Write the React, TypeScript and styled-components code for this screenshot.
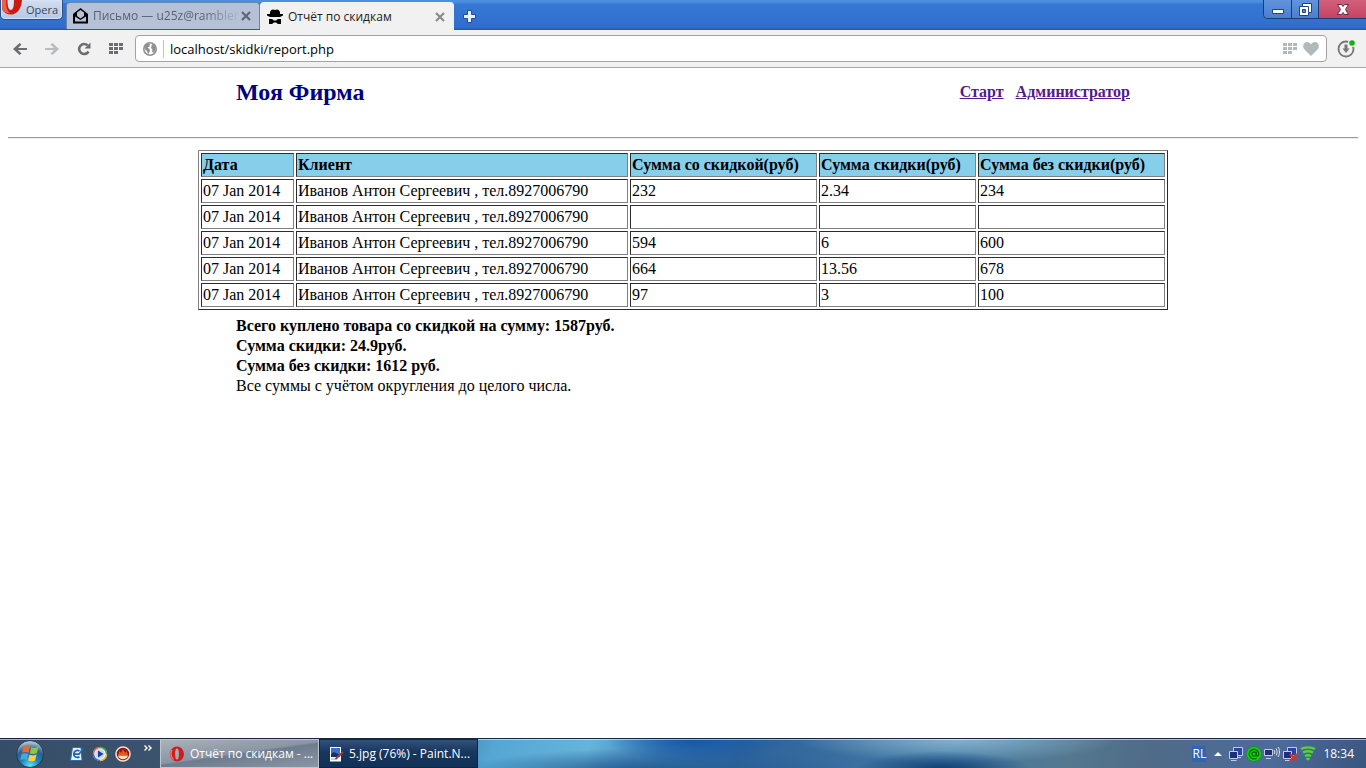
import React from 'react';
import styled, { createGlobalStyle } from 'styled-components';

const UI_FONT = '"Open Sans", "Noto Sans", sans-serif';
const PAGE_FONT = '"Liberation Serif", "Times New Roman", serif';

const GlobalStyle = createGlobalStyle`
  *, *::before, *::after { box-sizing: border-box; }
  body { margin: 0; background: #fff; }
  button, input { font: inherit; color: inherit; margin: 0; }
  svg { display: block; flex: none; }
`;

const Screen = styled.div`
  min-height: 100vh;
  display: flex;
  flex-direction: column;
`;

/* ---------- browser frame ---------- */

const TabStrip = styled.header`
  display: flex;
  align-items: flex-start;
  height: 30px;
  background: linear-gradient(#4a90e0 0, #4a90e0 2px, #3778d4 4px, #2f6dcd 28px, #235ca8 29px);
  font: 12px/16px ${UI_FONT};
`;

const OperaButton = styled.button`
  display: flex;
  align-items: center;
  gap: 4px;
  width: 63px;
  height: 20px;
  padding: 0 0 0 1px;
  border: 1px solid #2b4f86;
  border-width: 0 1px 1px;
  border-radius: 0 0 5px 5px;
  background: linear-gradient(#d3def0, #b4c8e8);
  box-shadow: inset 0 0 0 1px #d5e2f5;
  color: #3c4656;
  font-size: 11px;
  svg { align-self: flex-start; }
`;

const Tabs = styled.div`
  display: flex;
  flex: 1;
  min-width: 0;
  align-items: flex-start;
  padding: 2px 0 0 3px;
`;

const Tab = styled.div<{ $active?: boolean }>`
  display: flex;
  align-items: center;
  width: 194px;
  height: ${p => (p.$active ? 28 : 27)}px;
  padding: 0 8px 0 6px;
  border: 1px solid ${p => (p.$active ? '#f1f1f1' : '#6d84a8')};
  border-bottom: 0;
  border-radius: 4px 4px 0 0;
  background: ${p => (p.$active ? '#f1f1f1' : '#b4c1d6')};
  color: ${p => (p.$active ? '#222' : '#596270')};
`;

const TabTitle = styled.button<{ $fade?: boolean }>`
  flex: 1;
  min-width: 0;
  padding: 0 0 0 5px;
  border: 0;
  background: none;
  white-space: nowrap;
  text-align: left;
  ${p => p.$fade && 'mask-image: linear-gradient(90deg, #000 75%, transparent);'}
`;

const IconButton = styled.button`
  display: flex;
  align-items: center;
  justify-content: center;
  padding: 0;
  border: 0;
  background: none;
`;

const NewTab = styled(IconButton)`
  width: 30px;
  height: 28px;
`;

const WindowControls = styled.div`
  display: flex;
  height: 19px;
  border: 1px solid #1d3c74;
  border-width: 0 0 1px 1px;
  border-radius: 0 0 0 5px;
  overflow: hidden;
`;

const WindowButton = styled(IconButton)<{ $close?: boolean }>`
  width: ${p => (p.$close ? 48 : 27)}px;
  background: ${p => (p.$close ? 'linear-gradient(#d0607c, #c64462)' : 'linear-gradient(#6294dc, #4a7fd0)')};
  & + & { border-left: 1px solid #1d3c74; }
`;

const Toolbar = styled.nav`
  display: flex;
  align-items: center;
  height: 38px;
  padding: 0 10px 0 11px;
  border-bottom: 1px solid #a9a9a9;
  background: #f1f1f1;
`;

const NavButtons = styled.div`
  display: flex;
  gap: 14px;
  margin-right: 10px;
  ${IconButton} { width: 18px; height: 20px; }
`;

const AddressBar = styled.div`
  display: flex;
  flex: 1;
  align-items: center;
  height: 27px;
  margin-right: 10px;
  padding: 0 7px;
  border: 1px solid #a3a3a3;
  border-radius: 4px;
  background: #fff;
  gap: 6px;
`;

const Address = styled.input`
  flex: 1;
  min-width: 0;
  height: 18px;
  padding: 0 0 0 6px;
  border: 0;
  border-left: 1px solid #c4c4c4;
  outline: 0;
  background: none;
  color: #000;
  font: 13px/18px ${UI_FONT};
`;

/* ---------- report page ---------- */

const Page = styled.main`
  flex: 1;
  padding: 0 8px;
  color: #000;
  font: 16px/20px ${PAGE_FONT};
`;

const Column = styled.div`
  width: 100%;
  max-width: 894px;
  margin: 0 auto;
`;

const Masthead = styled(Column)`
  display: flex;
  align-items: center;
  justify-content: space-between;
  height: 48px;
`;

const SiteName = styled.h1`
  margin: 0;
  color: #000080;
  font-size: 24px;
  line-height: 28px;
`;

const Menu = styled.nav`
  display: flex;
  gap: 12px;
  font-weight: bold;
`;

const MenuLink = styled.a`
  color: #551a8b;
`;

const Rule = styled.hr`
  height: 2px;
  margin: 21px 0 11px;
  border: 0;
  border-top: 1px solid #9a9a9a;
  border-bottom: 1px solid #eee;
`;

const ReportTable = styled.table`
  width: 100%;
  max-width: 970px;
  margin: 0 auto;
  table-layout: fixed;
  border: 1px solid;
  border-color: #808080 #2c2c2c #2c2c2c #808080;
  border-spacing: 2px;
  th, td {
    height: 24px;
    padding: 1px;
    border: 1px solid;
    border-color: #2c2c2c #808080 #808080 #2c2c2c;
    text-align: left;
  }
  th { background: #87ceeb; }
`;

const Summary = styled(Column)`
  padding-top: 6px;
  p { margin: 0; }
`;

/* ---------- taskbar ---------- */

const Taskbar = styled.footer`
  display: flex;
  height: 30px;
  border-top: 1px solid #16263d;
  box-shadow: inset 0 1px 0 #ffffff90;
  background:
    radial-gradient(ellipse 90px 20px at 69% 110%, #123f74 10%, transparent),
    radial-gradient(ellipse 90px 26px at 51% 0, #1a5aa5 10%, transparent),
    radial-gradient(ellipse 160px 24px at 70% 0, #84b0c8 5%, transparent),
    radial-gradient(ellipse 200px 26px at 48% 120%, #285f94 20%, transparent),
    linear-gradient(110deg, #364d68 0%, #3c536e 12%, #4f8fb8 34%, #55a6d3 36%, #66b4da 43%,
      #3a7ab5 49%, #2d639b 54%, #3a6e9f 62%, #427ca9 69%, #55788f 78%, #4f6b88 84%, #4d6b9a 93%, #39567f 100%);
  color: #fff;
  font: 12px/16px ${UI_FONT};
`;

const Launchers = styled.div`
  display: flex;
  align-items: center;
  width: 160px;
  padding: 0 6px 0 16px;
`;

const QuickItems = styled.div`
  display: flex;
  align-items: center;
  gap: 7px;
  margin-left: 25px;
`;

const More = styled(IconButton)`
  align-self: flex-start;
  margin: 6px 0 0 13px;
`;

const Task = styled.button<{ $active?: boolean }>`
  display: flex;
  align-items: center;
  gap: 5px;
  width: 159px;
  padding: 0 8px;
  border: 1px solid ${p => (p.$active ? '#c0c6cd' : '#0d2646')};
  background: ${p =>
    p.$active
      ? 'linear-gradient(172deg, #a9b1bb 0%, #8b96a4 48%, #6d7c8e 52%, #8a96a4 100%)'
      : 'linear-gradient(#31527a, #17365c 45%, #123158)'};
  white-space: nowrap;
`;

const Tray = styled.div`
  display: flex;
  align-items: center;
  gap: 2px;
  margin-left: auto;
  padding-right: 12px;
`;

const Language = styled.span`
  width: 14px;
  margin-right: 6px;
  background: #2e66b4;
  text-align: center;
`;

const TrayToggle = styled(IconButton)`
  margin-right: 4px;
`;

const Clock = styled.time`
  margin-left: 5px;
`;

/* ---------- drawings ---------- */

const OperaLogo = () => (
  <svg width="20" height="16" viewBox="0 0 20 16">
    <path d="M0 0H20C19.500 8 15.500 14.500 9 14.500C5 14.500 2 12.500 0 9.500Z" fill="#c91b12" />
    <path d="M0 0H4C4 6 5 12 8.500 13C4 14 1 11 0 9Z" fill="#e8604f" />
    <path d="M5.500 0H12C12 6.500 11 10 8.800 10C6.500 10 5.500 6 5.500 0Z" fill="#dbe4f2" />
  </svg>
);

const Cross = ({ color }: { color: string }) => (
  <svg width="10" height="10" viewBox="0 0 10 10" stroke={color} strokeWidth="2.200">
    <path d="M1 1L9 9M9 1L1 9" />
  </svg>
);

const Envelope = () => (
  <svg width="15" height="16" viewBox="0 0 15 16">
    <path d="M7.500 0L15 6V15.500H0V6Z" fill="#000" />
    <path d="M4 4.500L7.500 2L11 4.500V8L7.500 10.500L4 8Z" fill="#b4c1d6" />
    <path d="M2 8.500L7.500 12L13 8.500V13.500H2Z" fill="#b4c1d6" />
  </svg>
);

const Spy = () => (
  <svg width="16" height="16" viewBox="0 0 16 16" fill="#000">
    <path d="M3 5V3.500C3 2 4.500 .5 6 .5L8 1L10 .5C11.500 .5 13 2 13 3.500V5H16V6.500L13 8H3L0 6.500V5Z" />
    <path d="M2 10H5L7 11.500H9L11 10H14V15H11L9 13.500H7L5 15H2Z" />
  </svg>
);

const Plus = () => (
  <svg width="13" height="13" viewBox="0 0 13 13">
    <path d="M4.500 .5H8.500V4.500H12.500V8.500H8.500V12.500H4.500V8.500H.5V4.500H4.500Z" fill="#e4efff" stroke="#1f4f9c" />
  </svg>
);

const MinimizeGlyph = () => (
  <svg width="14" height="12" viewBox="0 0 14 12">
    <path d="M1.500 6.500H12.500V10.500H1.500Z" fill="#fff" stroke="#24457c" />
  </svg>
);

const RestoreGlyph = () => (
  <svg width="13" height="13" viewBox="0 0 13 13">
    <path d="M3.500 .5H12.500V9.500H9.500V12.500H.5V3.500H3.500Z" fill="#fff" stroke="#24457c" />
    <path d="M3 3.500H9.500V9.500" fill="none" stroke="#24457c" />
    <path d="M3.500 6.500H6.500V9.500H3.500Z" fill="#5a8cd8" stroke="#24457c" />
  </svg>
);

const CloseGlyph = () => (
  <svg width="12" height="11" viewBox="0 0 12 11">
    <path d="M.5 .5H4.500L6 2.500L7.500 .5H11.500L8.500 5.500L11.500 10.500H7.500L6 8.500L4.500 10.500H.5L3.500 5.500Z" fill="#fff" stroke="#5e2f4a" />
  </svg>
);

const Arrow = ({ color, flip }: { color: string; flip?: boolean }) => (
  <svg width="14" height="12" viewBox="0 0 14 12" fill={color}>
    <path d={flip ? 'M0 5H9L5.500 1.500L7.500 0L14 6L7.500 12L5.500 10.500L9 7H0Z' : 'M14 5H5L8.500 1.500L6.500 0L0 6L6.500 12L8.500 10.500L5 7H14Z'} />
  </svg>
);

const Reload = () => (
  <svg width="14" height="14" viewBox="0 0 14 14">
    <path d="M10.500 3.300A5 5 0 1 0 11.500 9.500" fill="none" stroke="#6a6e72" strokeWidth="2.600" />
    <path d="M13.500 .5V6.500H7.500Z" fill="#6a6e72" />
  </svg>
);

const Grid = ({ color }: { color: string }) => (
  <svg width="14" height="11" viewBox="0 0 14 11" fill={color}>
    <path d="M0 0h4v3H0zM5 0h4v3H5zM10 0h4v3h-4zM0 4h4v3H0zM5 4h4v3H5zM10 4h4v3h-4zM0 8h4v3H0zM5 8h4v3H5z" />
  </svg>
);

const Globe = () => (
  <svg width="14" height="14" viewBox="0 0 14 14">
    <circle cx="7" cy="7" r="6.200" fill="#fff" stroke="#909090" strokeWidth="1.600" />
    <path d="M1.500 4L4 1.500L7 2L6.500 4.500L4.500 5.500L6.500 7L7 9L5 12.500L4 9L2 7.500ZM9 2L12 4L12.500 8L10.500 11L9 9.500L9.500 7.500L8 6Z" fill="#909090" />
  </svg>
);

const Heart = () => (
  <svg width="16" height="14" viewBox="0 0 16 14">
    <path d="M8 14L1.500 7.500C-1.500 4 1 0 4 0C6 0 7.300 1 8 2.500C8.700 1 10 0 12 0C15 0 17.500 4 14.500 7.500Z" fill="#b1b9bd" />
  </svg>
);

const Download = () => (
  <svg width="19" height="19" viewBox="0 0 19 19">
    <circle cx="9" cy="10" r="7.500" fill="none" stroke="#777" strokeWidth="1.800" />
    <path d="M7.500 5.500H10.500V9.500H12.500L9 14L5.500 9.500H7.500Z" fill="#777" />
    <circle cx="15" cy="4" r="4" fill="#f1f1f1" />
    <circle cx="15" cy="4" r="2.800" fill="#12b312" />
  </svg>
);

const StartOrb = () => (
  <svg width="28" height="28" viewBox="0 0 28 28">
    <defs>
      <radialGradient id="orb" cx="50%" cy="95%" r="90%">
        <stop offset="0" stopColor="#5fe6fb" />
        <stop offset=".4" stopColor="#1f7fb8" />
        <stop offset=".7" stopColor="#2b628f" />
        <stop offset="1" stopColor="#b4c6d4" />
      </radialGradient>
    </defs>
    <circle cx="14" cy="14" r="13.500" fill="url(#orb)" stroke="#1f3a58" />
    <path d="M7.500 6.500C10 5.300 12 5.500 14 6.800L12.600 12.800C10.600 11.600 8.500 11.600 6 12.700Z" fill="#ee6a28" />
    <path d="M15.200 7.300C17.500 8.500 19.700 8.300 22.500 7.100L20.900 13C18.500 14.200 16 14.200 13.800 13.200Z" fill="#8fc63d" />
    <path d="M5.700 14.100C8 13 10.300 13 12.300 14.200L10.900 20C8.900 18.900 7 18.900 4.300 20Z" fill="#4ba4e8" />
    <path d="M13.500 14.700C15.800 15.700 18.200 15.600 20.600 14.500L19 20.500C16.600 21.600 14.300 21.600 12 20.600Z" fill="#fbd13b" />
  </svg>
);

const NoteIcon = () => (
  <svg width="16" height="16" viewBox="0 0 16 16">
    <path d="M3.500 1.500H12L13 14.500H1.500Z" fill="#e4f4ff" stroke="#2470b6" />
    <path d="M10.500 5C8 3.500 5 5 4.800 8S7.500 12 10.500 10.800M5.500 8.200H10L14.500 2.500" fill="none" stroke="#1c67b8" strokeWidth="1.800" />
  </svg>
);

const PlayerIcon = () => (
  <svg width="16" height="16" viewBox="0 0 16 16">
    <circle cx="8" cy="8" r="7" fill="#fff" />
    <path d="M8 1.500A6.500 6.500 0 0 1 14.500 8" fill="none" stroke="#48a648" strokeWidth="1.600" />
    <path d="M14.500 8A6.500 6.500 0 0 1 8 14.500" fill="none" stroke="#e8b22c" strokeWidth="1.600" />
    <path d="M8 14.500A6.500 6.500 0 0 1 1.500 8" fill="none" stroke="#3c74c8" strokeWidth="1.600" />
    <path d="M1.500 8A6.500 6.500 0 0 1 8 1.500" fill="none" stroke="#d8694a" strokeWidth="1.600" />
    <circle cx="8" cy="8" r="4.800" fill="#c9d8f2" />
    <path d="M6 4.500L11.500 8L6 11.500Z" fill="#1f3aa0" />
  </svg>
);

const BurnerIcon = () => (
  <svg width="16" height="16" viewBox="0 0 16 16">
    <circle cx="8" cy="8" r="7" fill="#8f1510" stroke="#f1dcd4" strokeWidth="1.600" />
    <path d="M3 9L4.500 5L6 7L8 3L10 7L11.500 5L13 9Z" fill="#e8581c" />
    <path d="M3 9.500H13C12.500 12 10.500 13.200 8 13.200S3.500 12 3 9.500Z" fill="#f6e3b0" />
  </svg>
);

const Chevrons = () => (
  <svg width="8" height="6" viewBox="0 0 8 6" fill="none" stroke="#fff" strokeWidth="1.400">
    <path d="M.5 .5L3 3L.5 5.500M4.500 .5L7 3L4.500 5.500" />
  </svg>
);

const OperaRing = () => (
  <svg width="16" height="16" viewBox="0 0 16 16">
    <ellipse cx="8" cy="8" rx="7" ry="7.500" fill="#cf1d1d" />
    <path d="M3 4C1.500 7 2 11 4.500 13.500" fill="none" stroke="#f07a70" strokeWidth="1.400" />
    <ellipse cx="8" cy="8" rx="1.900" ry="5.500" fill="#a2abb6" />
  </svg>
);

const PaintIcon = () => (
  <svg width="16" height="16" viewBox="0 0 16 16">
    <path d="M2 1H13V15.500H2Z" fill="#fff" />
    <path d="M3 2H12V10H3Z" fill="#3b6fc8" />
    <path d="M3 8L6 6L12 9V11H3Z" fill="#16306e" />
    <path d="M3 12H8V14H3Z" fill="#c9cfdd" />
    <path d="M15 6L7.500 13" stroke="#a23b3b" strokeWidth="2" />
  </svg>
);

const UpArrow = () => (
  <svg width="8" height="4" viewBox="0 0 8 4">
    <path d="M0 4L4 0L8 4Z" fill="#fff" />
  </svg>
);

const Monitors = ({ off }: { off?: boolean }) => (
  <svg width="16" height="16" viewBox="0 0 16 16">
    <path d="M5.500 1.500H14.500V9.500H5.500ZM8 11.500H13" fill="#27459c" stroke="#c6cbe4" />
    <path d="M1.500 5.500H9.500V12.500H1.500ZM3 14.500H8.500" fill="#1c2f7a" stroke="#c6cbe4" />
    {off && <path d="M8 8L15 15M15 8L8 15" stroke="#e02c2c" strokeWidth="2.400" />}
  </svg>
);

const AgentIcon = () => (
  <svg width="16" height="16" viewBox="0 0 16 16" fill="none">
    <circle cx="8" cy="8" r="7.500" fill="#13d013" stroke="#0a8a0a" strokeWidth=".6" />
    <circle cx="8" cy="8" r="2.200" stroke="#075e07" strokeWidth="1.200" />
    <path d="M10.300 5.500V9C10.300 11 12.800 10.500 12.800 8A4.800 4.800 0 1 0 10.500 12.200" stroke="#075e07" strokeWidth="1.100" />
  </svg>
);

const WirelessMonitor = () => (
  <svg width="16" height="16" viewBox="0 0 16 16" fill="none">
    <path d="M.5 3.500H8.500V9.500H.5ZM2 12.500H7" fill="#1c2f7a" stroke="#c6cbe4" />
    <path d="M10 4C11 5 11 7 10 8M12 2.500C13.500 4.500 13.500 7.500 12 9.500M14 1C16 4 16 8 14 11" stroke="#e3e7ee" />
  </svg>
);

const Signal = () => (
  <svg width="16" height="16" viewBox="0 0 16 16" fill="none" stroke="#56d13c" strokeWidth="2.400">
    <path d="M1 3C5 .8 11 .8 15 3M3 6.500C6 5 10 5 13 6.500M5 10C7 9 9 9 11 10M6.500 13.300C7.500 12.800 8.500 12.800 9.500 13.300" />
  </svg>
);

/* ---------- data ---------- */

const columns = [
  { title: 'Дата', width: 93 },
  { title: 'Клиент', width: 332 },
  { title: 'Сумма со скидкой(руб)', width: 187 },
  { title: 'Сумма скидки(руб)', width: 157 },
  { title: 'Сумма без скидки(руб)', width: 187 },
];

const client = 'Иванов Антон Сергеевич , тел.8927006790';

const rows = [
  ['07 Jan 2014', client, '232', '2.34', '234'],
  ['07 Jan 2014', client, '', '', ''],
  ['07 Jan 2014', client, '594', '6', '600'],
  ['07 Jan 2014', client, '664', '13.56', '678'],
  ['07 Jan 2014', client, '97', '3', '100'],
];

export default function App() {
  return (
    <Screen>
      <GlobalStyle />
      <TabStrip>
        <OperaButton><OperaLogo />Opera</OperaButton>
        <Tabs>
          <Tab>
            <Envelope />
            <TabTitle $fade>Письмо — u25z@rambler</TabTitle>
            <IconButton aria-label="Закрыть вкладку"><Cross color="#5d6776" /></IconButton>
          </Tab>
          <Tab $active>
            <Spy />
            <TabTitle>Отчёт по скидкам</TabTitle>
            <IconButton aria-label="Закрыть вкладку"><Cross color="#8b8b8b" /></IconButton>
          </Tab>
          <NewTab aria-label="Новая вкладка"><Plus /></NewTab>
        </Tabs>
        <WindowControls>
          <WindowButton aria-label="Свернуть"><MinimizeGlyph /></WindowButton>
          <WindowButton aria-label="Восстановить"><RestoreGlyph /></WindowButton>
          <WindowButton $close aria-label="Закрыть"><CloseGlyph /></WindowButton>
        </WindowControls>
      </TabStrip>
      <Toolbar>
        <NavButtons>
          <IconButton aria-label="Назад"><Arrow color="#6a6e72" /></IconButton>
          <IconButton aria-label="Вперёд"><Arrow color="#b9bbbd" flip /></IconButton>
          <IconButton aria-label="Обновить"><Reload /></IconButton>
          <IconButton aria-label="Экспресс-панель"><Grid color="#6a6e72" /></IconButton>
        </NavButtons>
        <AddressBar>
          <Globe />
          <Address aria-label="Адрес" defaultValue="localhost/skidki/report.php" />
          <IconButton aria-label="Добавить на экспресс-панель"><Grid color="#b1b9bd" /></IconButton>
          <IconButton aria-label="В закладки"><Heart /></IconButton>
        </AddressBar>
        <IconButton aria-label="Загрузки"><Download /></IconButton>
      </Toolbar>

      <Page>
        <Masthead>
          <SiteName>Моя Фирма</SiteName>
          <Menu>
            <MenuLink href="#start">Старт</MenuLink>
            <MenuLink href="#admin">Администратор</MenuLink>
          </Menu>
        </Masthead>
        <Rule />
        <ReportTable>
          <colgroup>
            {columns.map(c => <col key={c.title} width={c.width} />)}
          </colgroup>
          <thead>
            <tr>{columns.map(c => <th key={c.title} scope="col">{c.title}</th>)}</tr>
          </thead>
          <tbody>
            {rows.map((row, i) => (
              <tr key={i}>{row.map((cell, j) => <td key={j}>{cell}</td>)}</tr>
            ))}
          </tbody>
        </ReportTable>
        <Summary>
          <p><b>Всего куплено товара со скидкой на сумму: 1587руб.</b></p>
          <p><b>Сумма скидки: 24.9руб.</b></p>
          <p><b>Сумма без скидки: 1612 руб.</b></p>
          <p>Все суммы с учётом округления до целого числа.</p>
        </Summary>
      </Page>

      <Taskbar>
        <Launchers>
          <IconButton aria-label="Пуск"><StartOrb /></IconButton>
          <QuickItems>
            <IconButton aria-label="Заметки"><NoteIcon /></IconButton>
            <IconButton aria-label="Проигрыватель"><PlayerIcon /></IconButton>
            <IconButton aria-label="Запись дисков"><BurnerIcon /></IconButton>
          </QuickItems>
          <More aria-label="Ещё"><Chevrons /></More>
        </Launchers>
        <Task $active><OperaRing />Отчёт по скидкам - ...</Task>
        <Task><PaintIcon />5.jpg (76%) - Paint.N...</Task>
        <Tray>
          <Language>RL</Language>
          <TrayToggle aria-label="Скрытые значки"><UpArrow /></TrayToggle>
          <Monitors />
          <AgentIcon />
          <WirelessMonitor />
          <Monitors off />
          <Signal />
          <Clock>18:34</Clock>
        </Tray>
      </Taskbar>
    </Screen>
  );
}
